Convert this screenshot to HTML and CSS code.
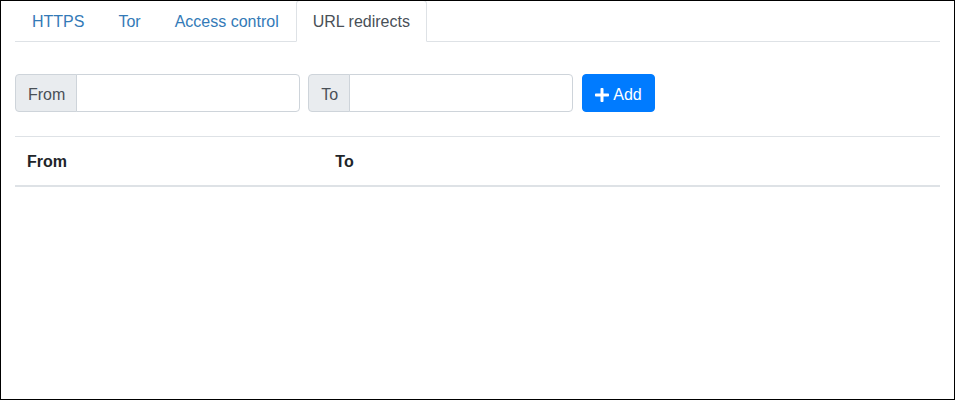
FILE: index.html
```html
<!DOCTYPE html>
<html lang="en">
<head>
<meta charset="utf-8">
<title>URL redirects</title>
<link rel="stylesheet" href="styles.css">
</head>
<body>
<ul class="tabs">
  <li class="tab"><a class="tab-link" href="#">HTTPS</a></li>
  <li class="tab"><a class="tab-link" href="#">Tor</a></li>
  <li class="tab"><a class="tab-link" href="#">Access control</a></li>
  <li class="tab"><a class="tab-link active" href="#">URL redirects</a></li>
</ul>
<form class="add-form">
  <div class="group">
    <span class="addon">From</span>
    <input class="field" type="text">
  </div>
  <div class="group">
    <span class="addon">To</span>
    <input class="field" type="text">
  </div>
  <button class="btn-add" type="button"><svg class="icon" viewBox="0 0 448 512" aria-hidden="true"><path fill="currentColor" d="M416 208H272V64c0-17.67-14.33-32-32-32h-32c-17.67 0-32 14.33-32 32v144H32c-17.67 0-32 14.33-32 32v32c0 17.67 14.33 32 32 32h144v144c0 17.67 14.33 32 32 32h32c17.670 0 32-14.33 32-32V304h144c17.67 0 32-14.33 32-32v-32c0-17.67-14.33-32-32-32z"/></svg> Add</button>
</form>
<table class="rules">
  <thead>
    <tr><th>From</th><th>To</th><th></th></tr>
  </thead>
  <tbody></tbody>
</table>
</body>
</html>
```
FILE: styles.css
```css
html, body {
  margin: 0;
  padding: 0;
}
body {
  font-family: "Liberation Sans", Arial, sans-serif;
  font-size: 16px;
  line-height: 1.5;
  color: #212529;
  background: #fff;
  padding: 0 15px;
  min-height: 100vh;
  box-sizing: border-box;
}
body::after {
  content: "";
  position: fixed;
  inset: 0;
  border: 1px solid #000;
  pointer-events: none;
}
.tabs {
  display: flex;
  list-style: none;
  margin: 0;
  padding: 0;
  border-bottom: 1px solid #dee2e6;
}
.tab {
  margin-bottom: -1px;
}
.tab-link {
  display: block;
  padding: 9px 16px 7px;
  line-height: 24px;
  border: 1px solid transparent;
  border-top-left-radius: 4px;
  border-top-right-radius: 4px;
  color: #337ab7;
  text-decoration: none;
}
.tab-link.active {
  color: #495057;
  background: #fff;
  border-color: #dee2e6 #dee2e6 #fff;
}
.add-form {
  display: flex;
  align-items: center;
  gap: 8px;
  margin: 32px 0 24px;
}
.group {
  display: flex;
  align-items: stretch;
}
.addon {
  display: flex;
  align-items: center;
  padding: 8px 11px 4px 12px;
  font-size: 16px;
  line-height: 24px;
  color: #495057;
  background: #e9ecef;
  border: 1px solid #ced4da;
  border-radius: 4px 0 0 4px;
}
.field {
  width: 224px;
  height: 38px;
  box-sizing: border-box;
  margin: 0 0 0 -1px;
  padding: 6px 12px;
  font: inherit;
  color: #495057;
  border: 1px solid #ced4da;
  border-radius: 0 4px 4px 0;
  background: #fff;
}
.btn-add {
  height: 38px;
  box-sizing: border-box;
  margin-left: 1px;
  padding: 8px 12px 4px;
  font: inherit;
  line-height: 24px;
  color: #fff;
  background: #007bff;
  border: 1px solid #007bff;
  border-radius: 4px;
  display: inline-flex;
  align-items: center;
  gap: 4px;
}
.icon {
  width: 14px;
  height: 16px;
}
.rules {
  width: 100%;
  border-collapse: collapse;
  table-layout: fixed;
}
.rules th {
  width: 33.333%;
  text-align: left;
  font-weight: bold;
  padding: 13px 12px 11px;
  line-height: 24px;
  border-top: 1px solid #dee2e6;
  border-bottom: 2px solid #dee2e6;
}
```
